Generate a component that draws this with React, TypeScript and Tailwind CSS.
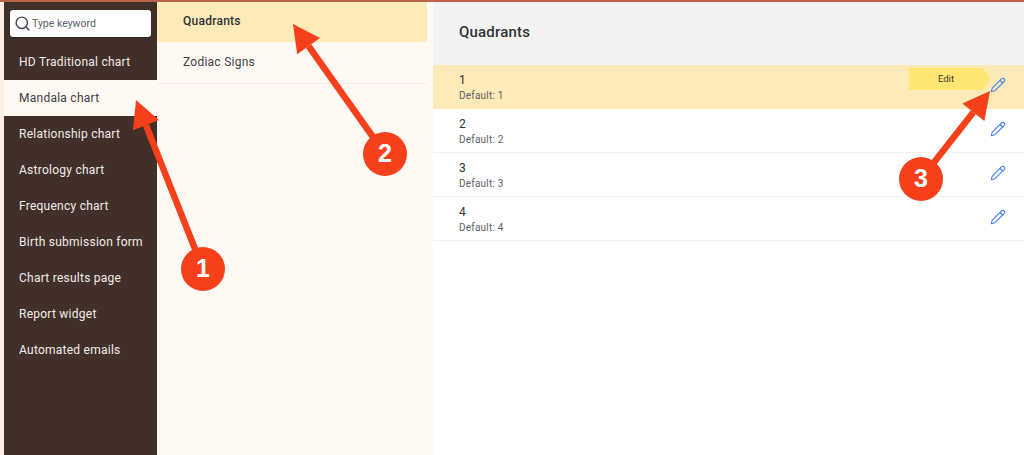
import { Pencil, Search } from "lucide-react";

const menu = [
  "HD Traditional chart",
  "Mandala chart",
  "Relationship chart",
  "Astrology chart",
  "Frequency chart",
  "Birth submission form",
  "Chart results page",
  "Report widget",
  "Automated emails",
];

const rows = ["1", "2", "3", "4"];

const badges = [
  { n: "1", pos: "left-[181px] top-[247px]" },
  { n: "2", pos: "left-[363px] top-[132px]" },
  { n: "3", pos: "left-[899px] top-[157px]" },
];

function Arrow({ x1, y1, x2, y2 }: { x1: number; y1: number; x2: number; y2: number }) {
  const dx = x2 - x1;
  const dy = y2 - y1;
  const len = Math.hypot(dx, dy);
  const ux = dx / len;
  const uy = dy / len;
  const bx = x2 - ux * 27;
  const by = y2 - uy * 27;
  const px = -uy * 14;
  const py = ux * 14;
  return (
    <g>
      <line x1={x1} y1={y1} x2={bx} y2={by} stroke="#f6401c" strokeWidth="6.5" />
      <polygon points={`${x2},${y2} ${bx + px},${by + py} ${bx - px},${by - py}`} fill="#f6401c" />
    </g>
  );
}

export default function App() {
  return (
    <div className="relative h-[455px] w-[1024px] overflow-hidden bg-[#fff9f4] font-['Roboto',sans-serif]">
      <div className="h-[2px] bg-[#b9654b]" />
      <div className="flex h-[453px]">
        <div className="w-[4px] bg-[#fcefe4]" />

        {/* main menu */}
        <div className="w-[153px] bg-[#412f29]">
          <div className="px-[6px] pt-[8px] pb-[7px]">
            <div className="flex h-[27px] items-center gap-[1px] rounded-[3px] bg-white pl-[4px] shadow-[0_1px_2px_rgba(0,0,0,0.4)]">
              <Search size={17} strokeWidth={2} className="text-[#3f4650]" />
              <span className="text-[10.5px] text-[#5d6168]">Type keyword</span>
            </div>
          </div>
          {menu.map((item) => (
            <div
              key={item}
              className={
                item === "Mandala chart"
                  ? "flex h-[36px] items-center bg-[#fff9f4] pb-[1px] pl-[15px] text-[12px] tracking-[0.25px] text-[#3c4043]"
                  : "flex h-[36px] items-center pb-[1px] pl-[15px] text-[12px] tracking-[0.25px] text-[#f1ece8]"
              }
            >
              {item}
            </div>
          ))}
        </div>

        {/* sub menu */}
        <div className="w-[270px]">
          <div className="flex h-[40px] items-center bg-[#fdeab9] pb-[2px] pl-[26px] text-[12px] font-medium tracking-[0.25px] text-[#2f3336]">
            Quadrants
          </div>
          <div className="flex h-[42px] items-center border-b border-[#f5eee8] pb-[2px] pl-[26px] text-[12px] tracking-[0.25px] text-[#3c4043]">
            Zodiac Signs
          </div>
        </div>

        {/* detail panel */}
        <div className="ml-[6px] flex-1 bg-white">
          <div className="flex h-[63px] items-center bg-[#f3f3f3] pb-[3px] pl-[26px] text-[15px] font-medium tracking-[0.2px] text-[#2f3336]">
            Quadrants
          </div>
          {rows.map((row, i) => (
            <div
              key={row}
              className={
                i === 0
                  ? "flex h-[44px] items-center justify-between bg-[#fdeab9] pr-[18px] pl-[26px]"
                  : "flex h-[44px] items-center justify-between border-b border-[#f8efe9] pr-[18px] pl-[26px]"
              }
            >
              <div className="pt-[2px]">
                <div className="-mt-[1px] mb-[1px] text-[12px] leading-[16px] text-[#2f3336]">{row}</div>
                <div className="text-[10px] leading-[14px] tracking-[0.2px] text-[#5d6168]">Default: {row}</div>
              </div>
              <div className="flex items-center">
                {i === 0 && (
                  <div className="-mt-[16px] flex h-[22px] w-[82px] items-center justify-center bg-[#ffe571] pr-[8px] text-[9.5px] text-[#3a3a32] [clip-path:polygon(0_0,90%_0,100%_50%,90%_100%,0_100%)]">
                    Edit
                  </div>
                )}
                <Pencil size={16} strokeWidth={1.6} className="mb-[4px] ml-[-1px] text-[#3f7ff0]" />
              </div>
            </div>
          ))}
        </div>
      </div>

      {/* annotations on top of the screenshot */}
      <svg className="absolute top-0 left-0" width="1024" height="455">
        <Arrow x1={203} y1={269} x2={136} y2={100} />
        <Arrow x1={385} y1={154} x2={293} y2={24} />
        <Arrow x1={921} y1={179} x2={990} y2={91} />
      </svg>
      {badges.map((b) => (
        <div
          key={b.n}
          className={`absolute flex h-[44px] w-[44px] items-center justify-center rounded-full bg-[#f6401c] font-['Liberation_Sans',sans-serif] text-[25px] font-bold text-white ${b.pos}`}
        >
          {b.n}
        </div>
      ))}
    </div>
  );
}
